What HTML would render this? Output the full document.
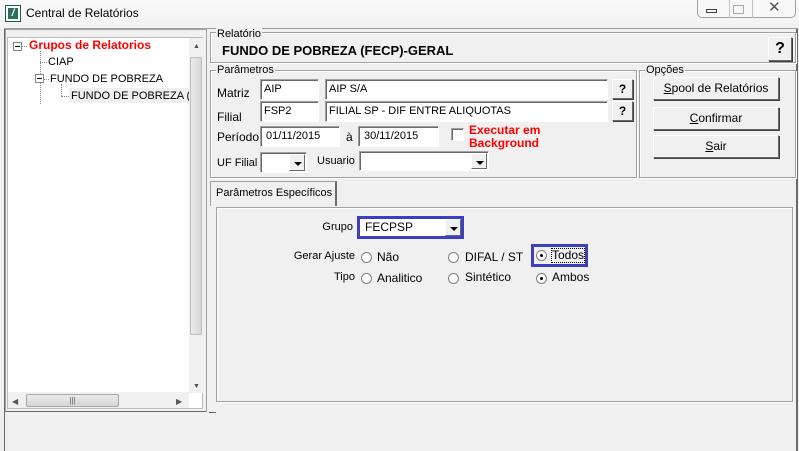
<!DOCTYPE html>
<html><head><meta charset="utf-8"><style>
*{box-sizing:border-box;margin:0;padding:0}
body{width:799px;height:451px;background:#f0f0f0;font-family:"Liberation Sans",Arial,sans-serif;font-size:11px;color:#000;position:relative;overflow:hidden}
.a{position:absolute}
.grp{position:absolute;border:1px solid #a0a0a0;box-shadow:inset 1px 1px 0 #fff,1px 1px 0 #fff}
.lg{position:absolute;top:-7px;left:5px;background:#f0f0f0;padding:0 1px;font-size:11px;line-height:12px}
.inp{position:absolute;background:#fff;border:1px solid #a0a0a0;border-right-color:#fff;border-bottom-color:#fff;box-shadow:inset 1px 1px 0 #696969;padding:2px 0 0 3px;font-size:11px;line-height:14px;white-space:nowrap;overflow:hidden}
.btn{position:absolute;background:#f0f0f0;border:1px solid;border-color:#fff #696969 #696969 #fff;box-shadow:1px 1px 0 #404040;text-align:center;font-size:12px}
.arr{position:absolute;right:1px;top:1px;bottom:1px;width:16px;background:#f0f0f0;border:1px solid;border-color:#fff #696969 #696969 #fff}
.arr:after{content:"";position:absolute;left:4px;top:7px;border:4px solid transparent;border-top:4px solid #000;border-bottom:0}
.rad{position:absolute;width:11px;height:11px;border-radius:50%;background:#fff;border:1px solid #808080}
.rad.on:after{content:"";position:absolute;left:3px;top:3px;width:3px;height:3px;border-radius:50%;background:#000}
.t{position:absolute;white-space:nowrap;font-size:11px;line-height:13px}
.r{text-align:right}
</style></head><body>
<div class="a" style="left:0;top:0;width:799px;height:29px;background:linear-gradient(#fafafa,#f2f2f2)"></div>
<div class="a" style="left:5px;top:5px;width:16px;height:17px;border:1px solid #1d5c48;background:#fff"><div style="position:absolute;left:2px;top:2px;width:10px;height:11px;background:#2d6e5e;color:#fff;font-size:10px;font-weight:bold;line-height:11px;text-align:center;font-style:italic">/</div></div>
<div class="t" style="left:26px;top:7px;font-size:12px">Central de Relatórios</div>
<div class="a" style="left:697px;top:0;width:99px;height:18px;border:1px solid #a0a0a0;border-top:0;border-radius:0 0 5px 5px;background:#f8f8f8"></div>
<div class="a" style="left:729px;top:0;width:1px;height:18px;background:#c0c0c0"></div>
<div class="a" style="left:752px;top:0;width:1px;height:18px;background:#c0c0c0"></div>
<div class="a" style="left:706px;top:9px;width:11px;height:4px;border:1px solid #444"></div>
<div class="a" style="left:733px;top:5px;width:11px;height:9px;border:1px solid #aaa"></div>
<div class="t" style="left:768px;top:1px;font-size:15px;color:#555">✕</div>
<div class="a" style="left:4px;top:28px;width:1px;height:423px;background:#6a6a6a"></div>
<div class="a" style="left:796px;top:28px;width:2px;height:423px;background:#6a6a6a"></div>
<div class="a" style="left:4px;top:28px;width:794px;height:1px;background:#a0a0a0"></div>
<!-- tree -->
<div class="a" style="left:5px;top:29px;width:202px;height:383px;border:1px solid #a0a0a0;border-right-color:#696969;border-bottom-color:#696969"></div>
<div class="a" style="left:7px;top:37px;width:196px;height:372px;background:#fff;border:1px solid #bbb"></div>
<div class="a" style="left:189px;top:38px;width:14px;height:355px;background:#f0f0f0"></div>
<div class="a" style="left:190px;top:57px;width:12px;height:278px;background:linear-gradient(90deg,#eaeaea,#d6d6d6);border:1px solid #bdbdbd;border-radius:2px"></div>
<div class="t" style="left:193px;top:40px;font-size:7px;color:#555">▲</div>
<div class="t" style="left:193px;top:380px;font-size:7px;color:#555">▼</div>
<div class="a" style="left:8px;top:392px;width:181px;height:16px;background:#f0f0f0"></div>
<div class="a" style="left:26px;top:394px;width:93px;height:13px;background:linear-gradient(#eaeaea,#d6d6d6);border:1px solid #a8a8a8;border-radius:2px;text-align:center;font-size:8px;line-height:11px;color:#555">|||</div>
<div class="t" style="left:12px;top:395px;font-size:8px;color:#555">◀</div>
<div class="t" style="left:176px;top:395px;font-size:8px;color:#555">▶</div>
<div class="a" style="left:13px;top:42px;width:9px;height:9px;border:1px solid #888;background:#fff"><div style="position:absolute;left:1px;top:3px;width:5px;height:1px;background:#000"></div></div>
<div class="a" style="left:22px;top:46px;width:5px;border-top:1px dotted #888"></div>
<div class="a" style="left:40px;top:51px;height:53px;border-left:1px dotted #888"></div>
<div class="a" style="left:40px;top:62px;width:7px;border-top:1px dotted #888"></div>
<div class="a" style="left:35px;top:74px;width:9px;height:9px;border:1px solid #888;background:#fff"><div style="position:absolute;left:1px;top:3px;width:5px;height:1px;background:#000"></div></div>
<div class="a" style="left:44px;top:79px;width:5px;border-top:1px dotted #888"></div>
<div class="a" style="left:61px;top:84px;height:12px;border-left:1px dotted #888"></div>
<div class="a" style="left:61px;top:96px;width:8px;border-top:1px dotted #888"></div>
<div class="t" style="left:29px;top:39px;font-size:12px;font-weight:bold;color:#f00">Grupos de Relatorios</div>
<div class="t" style="left:48px;top:56px">CIAP</div>
<div class="t" style="left:50px;top:73px">FUNDO DE POBREZA</div>
<div class="a" style="left:69px;top:88px;width:120px;height:15px;background:#f0f0f0"></div>
<div class="t" style="left:71px;top:90px;width:118px;overflow:hidden">FUNDO DE POBREZA (FEC</div>
<!-- right frame -->
<div class="a" style="left:206px;top:29px;width:1px;height:383px;background:#a0a0a0"></div>
<div class="grp" style="left:210px;top:32px;width:586px;height:31px"><div class="lg" style="top:-5px">Relatório</div></div>
<div class="t" style="left:222px;top:44px;font-size:13px;font-weight:bold">FUNDO DE POBREZA (FECP)-GERAL</div>
<div class="btn" style="left:768px;top:37px;width:24px;height:24px;font-size:16px;font-weight:bold;line-height:22px">?</div>
<div class="grp" style="left:210px;top:70px;width:427px;height:108px"><div class="lg">Parâmetros</div></div>
<div class="grp" style="left:639px;top:70px;width:157px;height:108px"><div class="lg">Opções</div></div>
<div class="btn" style="left:653px;top:77px;width:126px;height:23px;line-height:21px"><u>S</u>pool de Relatórios</div>
<div class="btn" style="left:653px;top:107px;width:126px;height:23px;line-height:21px"><u>C</u>onfirmar</div>
<div class="btn" style="left:653px;top:135px;width:126px;height:23px;line-height:21px"><u>S</u>air</div>
<div class="t" style="left:217px;top:87px;font-size:12px">Matriz</div>
<div class="inp" style="left:260px;top:79px;width:59px;height:21px">AIP</div>
<div class="inp" style="left:325px;top:79px;width:283px;height:21px">AIP S/A</div>
<div class="btn" style="left:612px;top:79px;width:21px;height:20px;font-weight:bold;line-height:18px">?</div>
<div class="t" style="left:217px;top:111px;font-size:12px">Filial</div>
<div class="inp" style="left:260px;top:101px;width:59px;height:21px">FSP2</div>
<div class="inp" style="left:325px;top:101px;width:283px;height:21px">FILIAL SP - DIF ENTRE ALIQUOTAS</div>
<div class="btn" style="left:612px;top:101px;width:21px;height:20px;font-weight:bold;line-height:18px">?</div>
<div class="t" style="left:217px;top:131px;font-size:12px">Período</div>
<div class="inp" style="left:260px;top:126px;width:80px;height:21px;padding-left:5px">01/11/2015</div>
<div class="t" style="left:346px;top:131px;font-size:12px">à</div>
<div class="inp" style="left:358px;top:126px;width:81px;height:21px;padding-left:5px">30/11/2015</div>
<div class="inp" style="left:451px;top:128px;width:13px;height:13px"></div>
<div class="t" style="left:469px;top:124px;font-size:12px;font-weight:bold;color:#f00;line-height:13px">Executar em<br>Background</div>
<div class="t" style="left:217px;top:157px;font-size:11px">UF Filial</div>
<div class="inp" style="left:260px;top:152px;width:47px;height:21px"><div class="arr"></div></div>
<div class="t" style="left:317px;top:155px;font-size:11px">Usuario</div>
<div class="inp" style="left:359px;top:151px;width:130px;height:20px"><div class="arr"></div></div>
<!-- tab -->
<div class="a" style="left:210px;top:181px;width:127px;height:25px;border:1px solid #a0a0a0;border-bottom:0;border-right-color:#696969;border-right-width:2px;background:#f0f0f0"></div>
<div class="t" style="left:216px;top:187px;font-size:11px">Parâmetros Específicos</div>
<div class="a" style="left:216px;top:207px;width:577px;height:195px;border:1px solid #a0a0a0;box-shadow:inset 1px 1px 0 #fff,1px 1px 0 #fff"></div>
<div class="t r" style="left:290px;width:63px;top:221px">Grupo</div>
<div class="a" style="left:357px;top:216px;width:107px;height:23px;border:3px solid #3d3fbf"></div>
<div class="inp" style="left:360px;top:219px;width:101px;height:17px;border:0;box-shadow:none;padding:1px 0 0 5px;font-size:12px">FECPSP<div class="arr" style="top:0;bottom:0;right:0"></div></div>
<div class="t r" style="left:270px;width:85px;top:250px">Gerar Ajuste</div>
<div class="rad" style="left:361px;top:252px"></div>
<div class="t" style="left:377px;top:251px;font-size:12px">Não</div>
<div class="rad" style="left:448px;top:252px"></div>
<div class="t" style="left:465px;top:251px;font-size:12px">DIFAL / ST</div>
<div class="a" style="left:531px;top:244px;width:57px;height:23px;border:3px solid #3d3fbf"></div>
<div class="rad on" style="left:536px;top:250px"></div>
<div class="t" style="left:552px;top:249px;font-size:12px;outline:1px dotted #000">Todos</div>
<div class="t r" style="left:300px;width:55px;top:271px">Tipo</div>
<div class="rad" style="left:361px;top:273px"></div>
<div class="t" style="left:377px;top:272px;font-size:12px">Analitico</div>
<div class="rad" style="left:448px;top:273px"></div>
<div class="t" style="left:465px;top:271px;font-size:12px">Sintético</div>
<div class="rad on" style="left:536px;top:273px"></div>
<div class="t" style="left:552px;top:271px;font-size:12px">Ambos</div>
<div class="a" style="left:209px;top:412px;width:7px;height:1px;background:#666"></div>
</body></html>
